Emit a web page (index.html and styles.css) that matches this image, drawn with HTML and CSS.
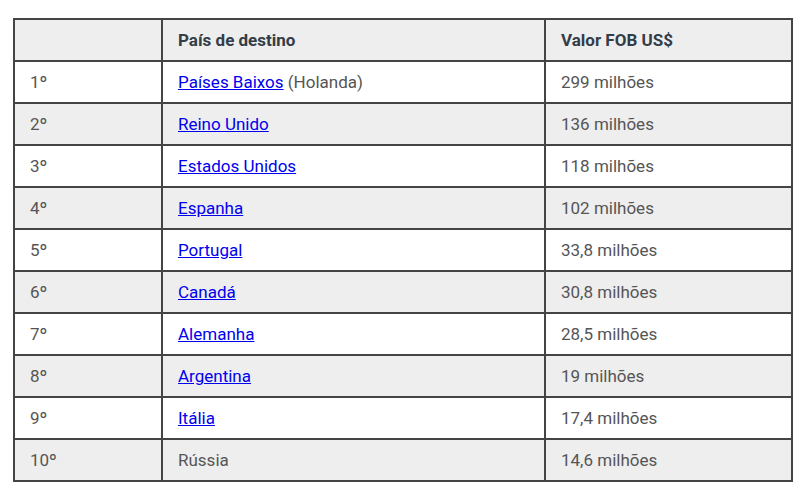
FILE: index.html
```html
<!DOCTYPE html>
<html lang="pt">
<head>
<meta charset="utf-8">
<link rel="stylesheet" href="styles.css">
</head>
<body>
<div class="wrap">
<table class="rank">
<colgroup><col class="c1"><col class="c2"><col class="c3"></colgroup>
<thead>
<tr><th></th><th>País de destino</th><th>Valor FOB US$</th></tr>
</thead>
<tbody>
<tr><td>1º</td><td><a href="#">Países Baixos</a> (Holanda)</td><td>299 milhões</td></tr>
<tr><td>2º</td><td><a href="#">Reino Unido</a></td><td>136 milhões</td></tr>
<tr><td>3º</td><td><a href="#">Estados Unidos</a></td><td>118 milhões</td></tr>
<tr><td>4º</td><td><a href="#">Espanha</a></td><td>102 milhões</td></tr>
<tr><td>5º</td><td><a href="#">Portugal</a></td><td>33,8 milhões</td></tr>
<tr><td>6º</td><td><a href="#">Canadá</a></td><td>30,8 milhões</td></tr>
<tr><td>7º</td><td><a href="#">Alemanha</a></td><td>28,5 milhões</td></tr>
<tr><td>8º</td><td><a href="#">Argentina</a></td><td>19 milhões</td></tr>
<tr><td>9º</td><td><a href="#">Itália</a></td><td>17,4 milhões</td></tr>
<tr><td>10º</td><td>Rússia</td><td>14,6 milhões</td></tr>
</tbody>
</table>
</div>
</body>
</html>
```
FILE: styles.css
```css
html, body {
  margin: 0;
  padding: 0;
  background: #fff;
}
.wrap {
  padding: 18px 0 0 13px;
}
.rank {
  border-collapse: collapse;
  width: 778px;
  table-layout: fixed;
  font-family: Roboto, "Liberation Sans", sans-serif;
  font-size: 17px;
  color: #555;
  border: 2px solid #444;
}
.c1 { width: 148px; }
.c2 { width: 383px; }
.c3 { width: 247px; }
.rank th, .rank td {
  border: 2px solid #444;
  padding: 10px 15px;
  line-height: 20px;
  text-align: left;
  vertical-align: middle;
}
.rank th {
  font-weight: 700;
  color: #333d47;
  background: #eeeeee;
}
.rank tbody tr:nth-child(even) td {
  background: #eeeeee;
}
.rank a {
  color: #0000ee;
  text-decoration: underline;
}
```
